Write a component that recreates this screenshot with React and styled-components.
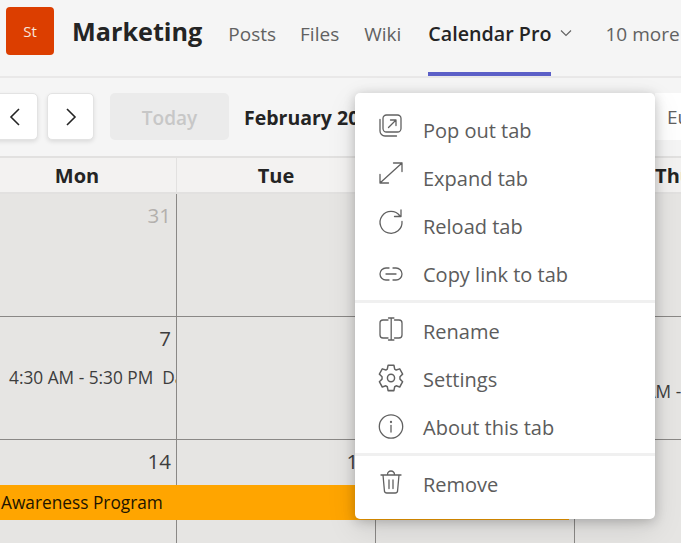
import React from "react";
import styled, { createGlobalStyle } from "styled-components";

const GlobalStyle = createGlobalStyle`
  html, body {
    margin: 0;
    padding: 0;
    background: #f5f5f5;
    font-family: "Open Sans", "Noto Sans", sans-serif;
  }
`;

const Page = styled.div`
  position: relative;
  width: 681px;
  height: 543px;
  overflow: hidden;
  background: #f5f5f5;
  color: #242424;
`;

const Header = styled.header`
  display: flex;
  align-items: flex-start;
  height: 76px;
  padding-left: 6px;
  border-bottom: 2px solid #e9e8e8;
  white-space: nowrap;
`;
const Avatar = styled.div`
  flex: none;
  display: flex;
  align-items: center;
  justify-content: center;
  width: 48px;
  height: 48px;
  margin-top: 7px;
  border-radius: 4px;
  background: #dc3e00;
  color: #f8e6dc;
  font-size: 15px;
`;
const TeamName = styled.h1`
  margin: 10px 0 0 18px;
  font-size: 25.2px;
  line-height: 42px;
  font-weight: 700;
  color: #242424;
`;
const Tabs = styled.nav`
  display: flex;
  align-items: flex-start;
  margin-left: 26px;
  height: 76px;
`;
const Tab = styled.div`
  box-sizing: border-box;
  height: 76px;
  margin-right: ${(p) => p.$gap}px;
  padding-top: 20px;
  font-size: ${(p) => (p.$active ? 19.7 : 19)}px;
  line-height: 28px;
  font-weight: ${(p) => (p.$active ? 600 : 400)};
  color: ${(p) => (p.$active ? "#242424" : "#616161")};
  border-bottom: 4px solid ${(p) => (p.$active ? "#5b5fc7" : "transparent")};
`;
const Chevron = styled.svg`
  flex: none;
  width: 14px;
  height: 8px;
  margin: 29px 32px 0 8px;
`;

const Toolbar = styled.div`
  box-sizing: border-box;
  display: flex;
  align-items: center;
  width: 690px;
  height: 78px;
  margin-left: -9px;
  padding-bottom: 1px;
`;
const NavButton = styled.button`
  flex: none;
  display: flex;
  align-items: center;
  justify-content: center;
  box-sizing: border-box;
  width: 47px;
  height: 47px;
  margin-right: 9px;
  padding: 0;
  border: 1px solid #e3e3e3;
  border-radius: 5px;
  background: #fff;
  box-shadow: 0 2px 4px rgba(0, 0, 0, 0.1);
`;
const TodayButton = styled.button`
  flex: none;
  width: 119px;
  height: 47px;
  margin-left: 7px;
  padding: 2px 0 0;
  border: none;
  border-radius: 5px;
  background: #ebebeb;
  color: #c7c7c7;
  font-family: inherit;
  font-size: 19px;
  font-weight: 600;
`;
const MonthLabel = styled.div`
  flex: 1;
  min-width: 0;
  margin-left: 15px;
  padding-top: 2px;
  font-size: 19.5px;
  font-weight: 700;
  white-space: nowrap;
  overflow: hidden;
`;
const ZoneButton = styled.div`
  flex: none;
  box-sizing: border-box;
  width: 26px;
  height: 47px;
  padding-left: 12px;
  background: #fff;
  color: #616161;
  font-size: 19px;
  line-height: 49px;
  overflow: hidden;
`;

const HeadRow = styled.div`
  display: grid;
  grid-template-columns: repeat(4, 199px);
  margin-left: -22px;
`;
const DayHead = styled.div`
  box-sizing: border-box;
  height: 38px;
  padding-top: 2px;
  border-top: 2px solid #e2e1e0;
  border-bottom: 2px solid #e2e1e0;
  border-right: 1px solid #e2e1e0;
  background: #f3f2f1;
  font-size: 20px;
  font-weight: 700;
  line-height: 32px;
  text-align: center;
  white-space: nowrap;
`;
const Calendar = styled.div`
  display: grid;
  grid-template-columns: repeat(4, 199px);
  grid-auto-rows: 123px;
  margin-left: -22px;
`;
const Cell = styled.div`
  box-sizing: border-box;
  overflow: hidden;
  border-right: 1px solid #8a8886;
  border-bottom: 1px solid #8a8886;
  background: #e6e5e3;
  padding: 8px 5px 0 0;
`;
const DayNumber = styled.div`
  text-align: right;
  font-size: 20.5px;
  line-height: 27px;
  color: ${(p) => (p.$muted ? "#b3b0ad" : "#3d3d3d")};
`;
const Appointment = styled.div`
  margin: ${(p) => (p.$alone ? 56 : 15)}px 0 0 31px;
  font-size: 17.3px;
  line-height: 22px;
  color: #3d3d3d;
  white-space: pre;
`;

const EventBar = styled.div`
  position: absolute;
  left: 0;
  top: 485px;
  width: 568px;
  height: 35px;
  padding-left: 1px;
  background: #ffa500;
  color: #201400;
  font-size: 17.3px;
  line-height: 35px;
`;

const Menu = styled.div`
  position: absolute;
  left: 355px;
  top: 93px;
  box-sizing: border-box;
  width: 300px;
  height: 426px;
  padding: 14px 0 10px;
  border-radius: 5px;
  background: #fff;
  box-shadow: 0 2px 12px rgba(0, 0, 0, 0.22), 0 10px 30px rgba(0, 0, 0, 0.1);
`;
const MenuItem = styled.div`
  display: flex;
  align-items: flex-start;
  gap: 20px;
  height: 48px;
  padding-left: 24px;
`;
const MenuLabel = styled.span`
  color: #5c5c5c;
  font-size: 20px;
  line-height: 48px;
`;
const MenuIcon = styled.svg`
  flex: none;
  width: 24px;
  height: 24px;
  margin-top: ${(p) => p.$top}px;
  overflow: visible;
  fill: none;
  stroke: #616161;
  stroke-width: 1.3;
  stroke-linecap: round;
  stroke-linejoin: round;
`;
const MenuDivider = styled.div`
  height: 3px;
  margin: 1px 0 5px;
  background: #f0f0f0;
`;

const icons = {
  popout: (
    <g transform="translate(-1 0)">
      <rect x="5" y="1" width="18" height="17" rx="3.5" />
      <path d="M2 5.5V17a5 5 0 0 0 5 5h11.5" />
      <path d="M10.5 13.5l7.5-7.5M12.5 6H18v5.5" />
    </g>
  ),
  expand: <path d="M1 22L23 2M14.5 2H23v8.5M1 13.5V22h8.5" />,
  reload: <path d="M21 7A11 11 0 1 0 23 12.5M22 1v6.5h-6.5" />,
  link: (
    <path d="M10 6H7a6 6 0 0 0 0 12h3M14 6h3a6 6 0 0 1 0 12h-3M7 12h10" />
  ),
  rename: (
    <path d="M9 3H4a3 3 0 0 0-3 3v12a3 3 0 0 0 3 3h5M15.5 3H20a3 3 0 0 1 3 3v12a3 3 0 0 1-3 3h-4.5M12.2 1v22M9.5 1h5.4M9.5 23h5.4" />
  ),
  settings: (
    <g transform="translate(12 12) scale(1.12 1.2) translate(-12 -12)">
      <circle cx="12" cy="12" r="3.2" />
      <path d="M14.6 1.4l.7 3.2 1.3.8 3.2-1 2.6 4.4-2.4 2.2v1.9l2.4 2.2-2.6 4.4-3.2-1-1.3.8-.7 3.2H9.4l-.7-3.2-1.3-.8-3.2 1-2.6-4.4 2.4-2.2v-1.9L1.6 8.8 4.2 4.4l3.2 1 1.3-.8.7-3.2z" />
    </g>
  ),
  info: (
    <>
      <circle cx="12" cy="12.5" r="11.7" />
      <path d="M12 11.5v6.5" />
      <circle cx="12" cy="8" r="0.5" />
    </>
  ),
  trash: (
    <path d="M2 5h20M8.5 5V4.5a3.5 3.5 0 0 1 7 0V5M4 5l1.4 15.5a2.5 2.5 0 0 0 2.5 2.5h8.2a2.5 2.5 0 0 0 2.5-2.5L20 5M10 10v8.5M14 10v8.5" />
  ),
};

const menuGroups = [
  [
    ["popout", "Pop out tab", 7],
    ["expand", "Expand tab", 6],
    ["reload", "Reload tab", 6],
    ["link", "Copy link to tab", 11],
  ],
  [
    ["rename", "Rename", 9],
    ["settings", "Settings", 10],
    ["info", "About this tab", 10],
  ],
  [["trash", "Remove", 9]],
];

const weeks = [
  [{ day: "31", muted: true }, {}, {}, {}],
  [
    { day: "7", text: "4:30 AM - 5:30 PM  Daily" },
    {},
    {},
    { text: "4:30 AM - 5:30 PM  Daily" },
  ],
  [{ day: "14" }, { day: "15" }, {}, {}],
  [{}, {}, {}, {}],
];

const App = () => {
  return (
    <Page>
      <GlobalStyle />
      <Header>
        <Avatar>St</Avatar>
        <TeamName>Marketing</TeamName>
        <Tabs>
          <Tab $gap={24}>Posts</Tab>
          <Tab $gap={25}>Files</Tab>
          <Tab $gap={27}>Wiki</Tab>
          <Tab $active $gap={0}>Calendar Pro</Tab>
          <Chevron viewBox="0 0 14 8" fill="none" stroke="#616161" strokeWidth="1.1">
            <path d="M2 1.5l5 5 5-5" />
          </Chevron>
          <Tab $gap={0}>10 more</Tab>
        </Tabs>
      </Header>
      <Toolbar>
        <NavButton aria-label="Previous">
          <svg width="12" height="20" viewBox="0 0 12 20" fill="none" stroke="#242424" strokeWidth="1.6">
            <path d="M10 2L2 10l8 8" />
          </svg>
        </NavButton>
        <NavButton aria-label="Next">
          <svg width="12" height="20" viewBox="0 0 12 20" fill="none" stroke="#242424" strokeWidth="1.6">
            <path d="M2 2l8 8-8 8" />
          </svg>
        </NavButton>
        <TodayButton>Today</TodayButton>
        <MonthLabel>February 2022</MonthLabel>
        <ZoneButton>Europe</ZoneButton>
      </Toolbar>
      <HeadRow>
        {["Mon", "Tue", "Wed", "Thu"].map((d) => (
          <DayHead key={d}>{d}</DayHead>
        ))}
      </HeadRow>
      <Calendar>
        {weeks.flat().map((c, i) => (
          <Cell key={i}>
            {c.day && <DayNumber $muted={c.muted}>{c.day}</DayNumber>}
            {c.text && <Appointment $alone={!c.day}>{c.text}</Appointment>}
          </Cell>
        ))}
      </Calendar>
      <EventBar>Awareness Program</EventBar>
      <Menu>
        {menuGroups.map((group, g) => (
          <React.Fragment key={g}>
            {g > 0 && <MenuDivider />}
            {group.map(([icon, label, top]) => (
              <MenuItem key={label}>
                <MenuIcon viewBox="0 0 24 24" $top={top}>
                  {icons[icon]}
                </MenuIcon>
                <MenuLabel>{label}</MenuLabel>
              </MenuItem>
            ))}
          </React.Fragment>
        ))}
      </Menu>
    </Page>
  );
};

export default App;
